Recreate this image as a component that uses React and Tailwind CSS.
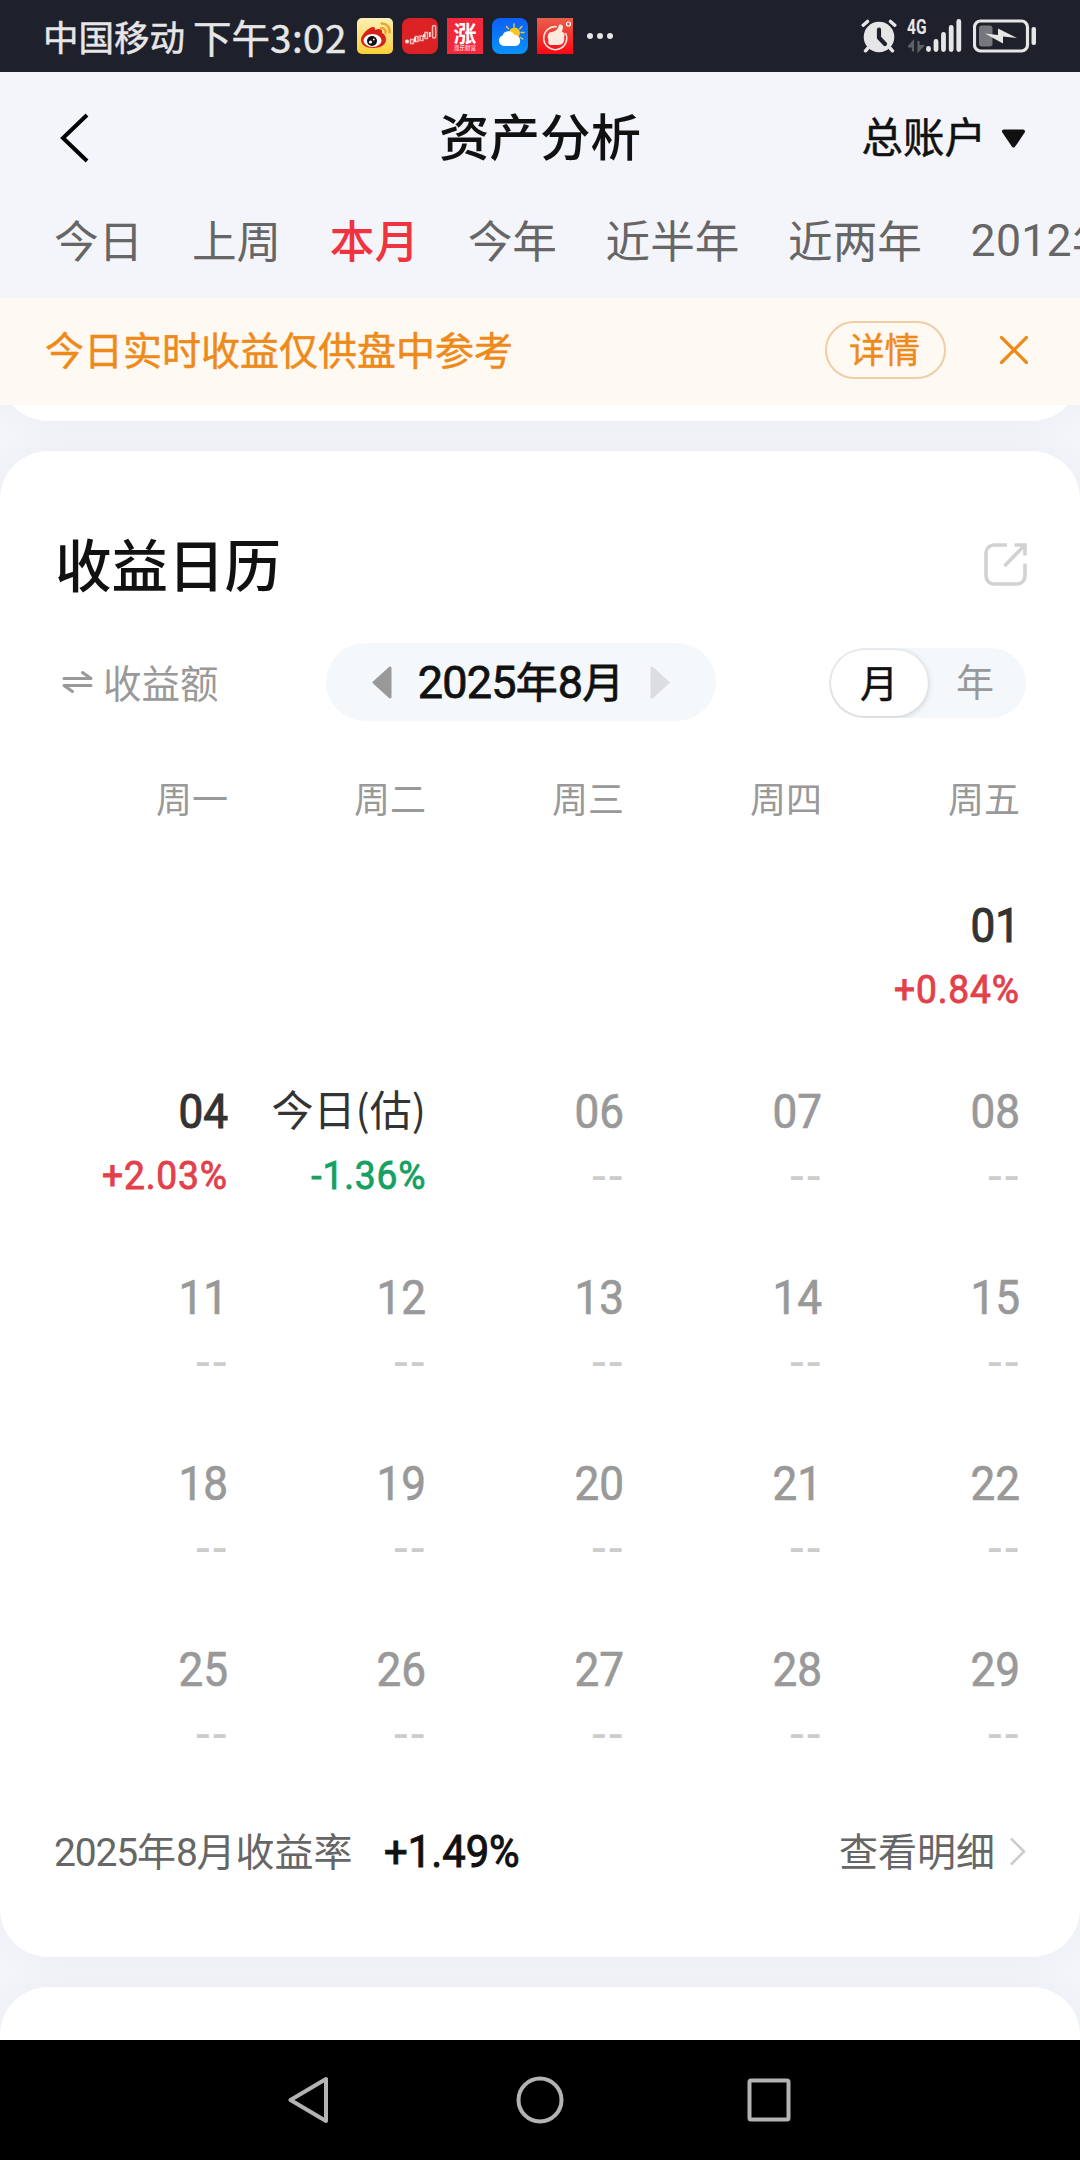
const tabs = ['今日', '上周', '本月', '今年', '近半年', '近两年', '2012年'];

const weekdays = ['周一', '周二', '周三', '周四', '周五'];

// One entry per trading day, null leaves the cell blank
const weeks = [
  [null, null, null, null, { day: '01', rate: '+0.84%' }],
  [
    { day: '04', rate: '+2.03%' },
    { day: '今日(估)', rate: '-1.36%', today: true },
    { day: '06' },
    { day: '07' },
    { day: '08' }
  ],
  [{ day: '11' }, { day: '12' }, { day: '13' }, { day: '14' }, { day: '15' }],
  [{ day: '18' }, { day: '19' }, { day: '20' }, { day: '21' }, { day: '22' }],
  [{ day: '25' }, { day: '26' }, { day: '27' }, { day: '28' }, { day: '29' }]
];

const WeiboIcon = () => (
  <svg width="36" height="36" viewBox="0 0 36 36">
    <defs>
      <linearGradient id="weibo" x1="0" y1="0" x2="0" y2="1">
        <stop offset="0" stopColor="#fdf0b8" />
        <stop offset="1" stopColor="#fccf35" />
      </linearGradient>
    </defs>
    <rect width="36" height="36" rx="5" fill="url(#weibo)" />
    <path d="M4 22c0-4 4-9 9-12 3-2 6-1 5 2 4-2 8-1 7 3 3 1 4 4 4 7 0 5-6 8-13 8S4 27 4 22z" fill="#d9211c" />
    <ellipse cx="15.500" cy="22.500" rx="9" ry="6.500" fill="#fff" />
    <circle cx="15" cy="23" r="5" fill="#111" />
    <circle cx="13.500" cy="24" r="1.600" fill="#fff" />
    <circle cx="16.800" cy="21.500" r="0.900" fill="#fff" />
    <path d="M24.500 5.500c5-.5 9 4 8 9M24 10c3-.3 5 2 4.500 5" fill="none" stroke="#eda42e" strokeWidth="2.400" strokeLinecap="round" />
  </svg>
);

const TrendIcon = () => (
  <svg width="36" height="36" viewBox="0 0 36 36">
    <rect width="36" height="36" rx="8" fill="#dc2224" />
    <g fill="none" stroke="#f6b9b3" strokeWidth="1.500">
      <rect x="8.500" y="21.500" width="3" height="4" />
      <rect x="13.500" y="18.500" width="2.500" height="5" />
      <rect x="18" y="18" width="3" height="4.500" />
      <rect x="23" y="14.500" width="2.500" height="6" />
      <rect x="30.500" y="7.500" width="3.200" height="12.500" rx="1.500" />
    </g>
    <circle cx="5" cy="23.500" r="2" fill="#fbe3df" />
    <path d="M13 19v5M22 16v3M27.800 14v5" stroke="#fff" strokeWidth="1.600" />
  </svg>
);

const RiseIcon = () => (
  <div className="flex h-9 w-9 flex-col items-center bg-[#f2293a] text-white">
    <span className="mt-[2px] text-[23px] leading-[24px] font-bold">涨</span>
    <span className="text-[5.500px] leading-[9px] whitespace-nowrap">涨乐财富</span>
  </div>
);

const WeatherIcon = () => (
  <svg width="36" height="36" viewBox="0 0 36 36">
    <defs>
      <linearGradient id="sky" x1="0" y1="0" x2="0" y2="1">
        <stop offset="0" stopColor="#0b60f5" />
        <stop offset="1" stopColor="#0a92fb" />
      </linearGradient>
    </defs>
    <rect width="36" height="36" rx="8" fill="url(#sky)" />
    <path d="M22 6v3M14.500 8.500l2 2.300M29.800 8.500l-2 2.300M29 14.500h3M28.500 19.500l2.200 1.500" stroke="#e9c545" strokeWidth="1.500" strokeLinecap="round" />
    <circle cx="22.500" cy="15" r="5.500" fill="#fcc520" />
    <path d="M12 28a5.500 5.500 0 0 1-1.500-10.600 6.500 6.500 0 0 1 12-.4A5.600 5.600 0 0 1 24 28z" fill="#fff" />
  </svg>
);

const ThumbIcon = () => (
  <svg width="36" height="36" viewBox="0 0 36 36">
    <defs>
      <linearGradient id="thumb" x1="0" y1="0" x2="0" y2="1">
        <stop offset="0" stopColor="#e8604a" />
        <stop offset="1" stopColor="#fa0713" />
      </linearGradient>
    </defs>
    <rect width="36" height="36" fill="url(#thumb)" />
    <path d="M20 8.800A11.500 11.500 0 1 0 28.500 15" fill="none" stroke="#fde5dc" strokeWidth="1.600" />
    <path d="M11 17c0-2 2-3 4-3 4-1 6-3 7-7 2-1 4 0 4 2l-1 5c3 0 3 3 2 5 1 4-1 8-5 8h-8c-3 0-3-3-2.500-5-1-2-1-3.500-.5-5z" fill="#fdeadf" />
    <circle cx="31.500" cy="6" r="2" fill="none" stroke="#fff" strokeWidth="1.200" />
  </svg>
);

const AlarmIcon = () => (
  <svg width="36" height="34" viewBox="0 0 36 34">
    <g stroke="#e6e6e6" strokeWidth="3.400" strokeLinecap="round">
      <path d="M2.200 6.200l4.300-3.800M29.500 2.400l4.300 3.800M7 29l-2.500 2.800M29 29l2.500 2.800" />
    </g>
    <circle cx="18" cy="18" r="15.300" fill="#e6e6e6" />
    <path d="M18 10.500v8.300l6 6.200" fill="none" stroke="#1e212b" strokeWidth="4.200" strokeLinecap="round" strokeLinejoin="round" />
  </svg>
);

const StatusBar = () => (
  <div className="flex h-[72px] shrink-0 items-center bg-[#1e212b] pl-[43px] text-[#e6e6e6]">
    <span className="w-[150px] text-[35.500px] leading-none whitespace-nowrap [-webkit-text-stroke:0.500px]">中国移动</span>
    <span className="w-[164px] text-[38.500px] leading-none whitespace-nowrap [-webkit-text-stroke:0.500px]">
      下午<span className="tracking-[0.5px]">3:02</span>
    </span>
    <div className="flex gap-[9px]">
      <WeiboIcon />
      <TrendIcon />
      <RiseIcon />
      <WeatherIcon />
      <ThumbIcon />
    </div>
    <div className="ml-[14px] flex gap-[4px]">
      <span className="h-1.5 w-1.5 rounded-full bg-[#e6e6e6]" />
      <span className="h-1.5 w-1.5 rounded-full bg-[#e6e6e6]" />
      <span className="h-1.5 w-1.5 rounded-full bg-[#e6e6e6]" />
    </div>
    <div className="ml-auto flex items-center gap-[11px] pr-[43px]">
      <AlarmIcon />
      <div className="relative">
        <svg width="54" height="34" viewBox="0 0 54 34">
          <g stroke="#e6e6e6" strokeWidth="4.800" strokeLinecap="round">
            <path d="M20.500 29.500v1M28 22.500v8M35.500 15.500v15M43.200 8.500v22M50.800 2.500v28" />
          </g>
          <path d="M5 32.500V23l-4 4.500h4M10.500 22v9.500l4-4.500h-4" stroke="#5e6068" strokeWidth="2.200" fill="#5e6068" />
        </svg>
        <span className="absolute -top-px -left-px origin-left scale-x-[0.74] font-['Roboto'] text-[21px] leading-[18px] font-bold">4G</span>
      </div>
      <svg width="64" height="34" viewBox="0 0 64 34">
        <rect x="1.500" y="2" width="53" height="30" rx="6" fill="none" stroke="#e6e6e6" strokeWidth="3.200" />
        <rect x="6" y="6.500" width="13.500" height="21" rx="3" fill="#75777d" />
        <path d="M12 14.500l13 1.500v-6.500L44 19l-14-1.500v7z" fill="#e6e6e6" />
        <rect x="58.500" y="8" width="4.500" height="18" rx="2" fill="#e6e6e6" />
      </svg>
    </div>
  </div>
);

const Header = () => (
  <div className="h-[226px] shrink-0 overflow-hidden bg-[#f4f5fa]">
    <div className="grid h-[130px] grid-cols-3 items-center px-[54px] text-[#111]">
      <svg className="mt-[2px] ml-[6px]" width="30" height="50" viewBox="0 0 30 50">
        <path d="M27 2L3 25l24 23" fill="none" stroke="#000" strokeWidth="4" />
      </svg>
      <h1 className="pb-[5px] text-center text-[50.500px] leading-none font-medium whitespace-nowrap">资产分析</h1>
      <div className="flex items-center justify-end gap-[15px]">
        <span className="pb-[2px] text-[41.500px] leading-none [-webkit-text-stroke:0.500px]">总账户</span>
        <svg className="mt-[3px]" width="25" height="20" viewBox="0 0 25 20">
          <path d="M3 2.500h19l-9.500 14z" fill="#111" stroke="#111" strokeWidth="4" strokeLinejoin="round" />
        </svg>
      </div>
    </div>
    <div className="flex h-[76px] items-center gap-[48.700px] pb-[2px] pl-[54px] text-[44.600px] leading-none whitespace-nowrap text-[#666]">
      {tabs.map((t) => (
        <span key={t} className={t === '本月' ? 'font-medium text-[#ef3440]' : ''}>
          {t.startsWith('2') ? (
            <>
              <span className="font-['Roboto'] tracking-[0.3px]">{t.slice(0, 4)}</span>
              {t.slice(4)}
            </>
          ) : (
            t
          )}
        </span>
      ))}
    </div>
  </div>
);

const Notice = () => (
  <div className="flex h-[107px] shrink-0 items-center bg-[#fff9f3] pr-[52px] pb-[4px] pl-[45px] text-[#ee8a1a]">
    <span className="pb-[2px] text-[39px] leading-none [-webkit-text-stroke:0.500px]">今日实时收益仅供盘中参考</span>
    <button className="ml-auto flex h-[58px] w-[121px] items-center justify-center rounded-full border-2 border-[#efcda5] pr-[2px] pb-[4px] text-[35.500px] leading-none [-webkit-text-stroke:0.400px]">
      详情
    </button>
    <svg className="ml-[54px]" width="28" height="28" viewBox="0 0 28 28">
      <path d="M1.500 1.500l25 25M26.500 1.500l-25 25" stroke="#ee8a1a" strokeWidth="3.200" strokeLinecap="round" />
    </svg>
  </div>
);

const DayCell = ({ item }) => {
  if (!item) return <div />;

  const dayColor = item.rate ? 'text-[#333] [-webkit-text-stroke:1.100px]' : 'text-[#999] [-webkit-text-stroke:0.700px]';
  const rateColor = item.rate && item.rate.startsWith('+') ? 'text-[#e2414a]' : 'text-[#16a163]';

  return (
    <div className="flex flex-col items-end">
      {item.today ? (
        <span className="flex h-[60px] items-center pb-[6px] text-[42px] leading-none whitespace-nowrap text-[#333]">{item.day}</span>
      ) : (
        <span className={`flex h-[60px] origin-right scale-x-[0.9] items-center font-['Roboto'] text-[49px] leading-none ${dayColor}`}>
          {item.day}
        </span>
      )}
      {item.rate ? (
        <span className={`flex h-[66px] origin-right scale-x-[0.94] items-center pt-[4px] font-['Roboto'] text-[39.500px] leading-none tracking-[0.900px] [-webkit-text-stroke:0.900px] ${rateColor}`}>
          {item.rate}
        </span>
      ) : (
        <span className="flex h-[66px] items-center pt-[4px] font-['Inter'] text-[36px] leading-none font-semibold text-[#ccc]">--</span>
      )}
    </div>
  );
};

const Calendar = () => (
  <section className="flex h-[1506px] shrink-0 flex-col rounded-[48px] bg-white shadow-[0_0_40px_rgba(0,0,0,0.04)]">
    <div className="mt-[73px] flex h-20 items-center justify-between pr-[53px] pl-[55px]">
      <h2 className="pb-[3px] text-[56.500px] leading-none font-medium text-[#111]">收益日历</h2>
      <svg width="43" height="43" viewBox="0 0 43 43" fill="none" stroke="#d2d2d2" strokeWidth="3.600">
        <path d="M23 2H10a8 8 0 0 0-8 8v23a8 8 0 0 0 8 8h23a8 8 0 0 0 8-8V20.500" />
        <path d="M30.500 2H41v10.500M41 2L20.500 23" />
      </svg>
    </div>

    <div className="mt-[39px] flex h-[78px] items-center pr-[54px] pl-[62px]">
      <div className="flex w-[264px] items-center gap-[10px] text-[#999]">
        <svg width="31" height="24" viewBox="0 0 31 24" fill="none" stroke="#999" strokeWidth="3" strokeLinecap="round" strokeLinejoin="round">
          <path d="M2 8.500h27l-8.500-6M29 15.500H2l8.500 6" />
        </svg>
        <span className="pb-[2px] text-[38.500px] leading-none">收益额</span>
      </div>
      <div className="flex h-[78px] w-[390px] items-center justify-between rounded-full bg-[#f4f8fb] px-[46px]">
        <svg width="20" height="33" viewBox="0 0 20 33">
          <path d="M18 2v29L2 16.500z" fill="#999" stroke="#999" strokeWidth="3" strokeLinejoin="round" />
        </svg>
        <span className="text-[42px] leading-none whitespace-nowrap text-[#111] [-webkit-text-stroke:0.800px]">
          <span className="font-['Roboto'] text-[45px] tracking-[-0.8px]">2025</span>年
          <span className="font-['Roboto'] text-[45px] tracking-[-0.8px]">8</span>月
        </span>
        <svg width="20" height="33" viewBox="0 0 20 33">
          <path d="M2 2v29l16-14.500z" fill="#dcdde1" stroke="#dcdde1" strokeWidth="3" strokeLinejoin="round" />
        </svg>
      </div>
      <div className="relative top-[1px] ml-auto flex h-[70px] w-[197px] items-center overflow-hidden rounded-full bg-[#f4f8fb] pl-[2px] text-[38px] leading-none">
        <span className="flex h-[66px] w-[97px] items-center justify-center rounded-full bg-white pr-[1px] pb-[5px] text-[#111] shadow-[0_1px_6px_rgba(0,0,0,0.2)] [-webkit-text-stroke:0.500px]">月</span>
        <span className="flex-1 pr-[4px] pb-[6px] text-center text-[#999]">年</span>
      </div>
    </div>

    <div className="mt-[46px] grid grid-cols-5 pr-[60px] pl-[30px] text-right text-[36px] leading-[60px] text-[#999]">
      {weekdays.map((d) => (
        <span key={d}>{d}</span>
      ))}
    </div>

    <div className="mt-[68px] grid auto-rows-[186px] grid-cols-5 pr-[60px] pl-[30px]">
      {weeks.flat().map((item, i) => (
        <DayCell key={i} item={item} />
      ))}
    </div>

    <div className="mt-[-4px] flex h-[60px] items-center px-[54px] text-[39px] leading-none whitespace-nowrap text-[#666]">
      <span>
        <span className="font-['Roboto'] tracking-[-1.200px]">2025</span>年
        <span className="font-['Roboto'] tracking-[-1.200px]">8</span>月收益率
      </span>
      <span className="ml-[31px] origin-left scale-x-[0.96] pt-[3px] font-['Roboto'] text-[43.500px] text-[#111] [-webkit-text-stroke:1px]">+1.49%</span>
      <span className="ml-auto pb-[4px]">查看明细</span>
      <svg className="ml-[14px]" width="17" height="29" viewBox="0 0 17 29">
        <path d="M2 1.500l13 13-13 13" fill="none" stroke="#ccc" strokeWidth="2.600" />
      </svg>
    </div>
  </section>
);

const NavBar = () => (
  <div className="flex h-[120px] shrink-0 items-center justify-center bg-black">
    <svg width="504" height="48" viewBox="0 0 504 48" fill="none" stroke="#b3b3b3" strokeWidth="4" strokeLinejoin="round">
      <path d="M38 3v42L2.500 24z" />
      <circle cx="252" cy="24" r="21.500" />
      <rect x="461.500" y="4.500" width="39" height="39" rx="1.500" />
    </svg>
  </div>
);

export default function App() {
  return (
    <div className="flex h-[2160px] w-[1080px] flex-col overflow-hidden bg-[#f4f5fa] font-['Noto_Sans_CJK_SC',sans-serif]">
      <StatusBar />
      <Header />
      <Notice />
      <div className="flex min-h-0 flex-1 flex-col gap-[30px] overflow-hidden">
        {/* Tail of the previous card */}
        <div className="-mt-[84px] h-[100px] shrink-0 rounded-[48px] bg-white shadow-[0_0_40px_rgba(0,0,0,0.04)]" />
        <Calendar />
        <div className="h-[200px] shrink-0 rounded-[48px] bg-white shadow-[0_0_40px_rgba(0,0,0,0.04)]" />
      </div>
      <NavBar />
    </div>
  );
}
